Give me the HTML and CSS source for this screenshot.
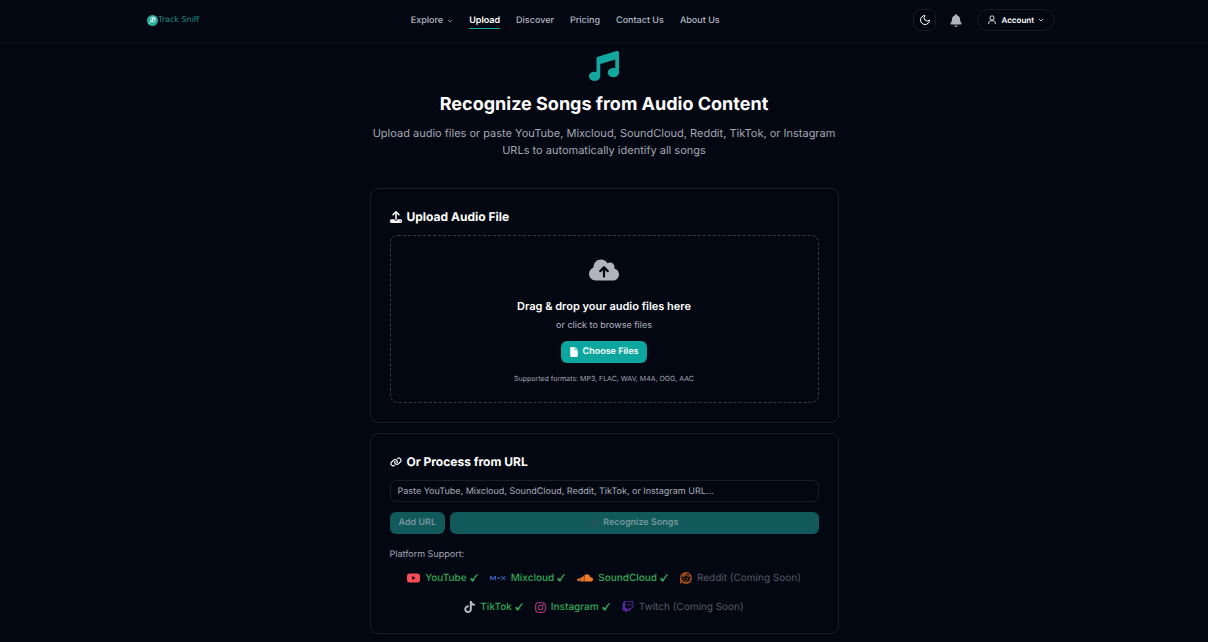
FILE: index.html
```html
<!DOCTYPE html>
<html lang="en">
<head>
<meta charset="utf-8">
<meta name="viewport" content="width=device-width, initial-scale=1">
<title>Track Sniff - Upload</title>
<link rel="stylesheet" href="styles.css">
</head>
<body>
<header class="header">
  <div class="header-inner">
    <a class="logo" href="#">
      <svg class="logo-mark" viewBox="0 0 22 22" aria-hidden="true"><circle cx="11" cy="11" r="11" fill="#27a99c"/><circle cx="12" cy="9" r="5" fill="none" stroke="#d8f5f1" stroke-width="1.600"/><path d="M8 13l-4 4.500M11 11.500V7l3-1v4" fill="none" stroke="#fff" stroke-width="1.800"/><circle cx="10" cy="11.500" r="1.500" fill="#fff"/></svg>
      <span>Track Sniff</span>
    </a>
    <nav class="nav">
      <a href="#">Explore <svg class="chevron" viewBox="0 0 24 24" aria-hidden="true"><path d="m4 8 8 8 8-8"/></svg></a>
      <a class="active" href="#">Upload</a>
      <a href="#">Discover</a>
      <a href="#">Pricing</a>
      <a href="#">Contact Us</a>
      <a href="#">About Us</a>
    </nav>
    <div class="actions">
      <button class="theme" type="button" aria-label="Toggle theme"><svg class="line-icon" viewBox="0 0 24 24"><path d="M12 3a6 6 0 0 0 9 9 9 9 0 1 1-9-9Z"/></svg></button>
      <button class="bell" type="button" aria-label="Notifications"><svg viewBox="0 0 448 512"><path d="M224 0c-17.700 0-32 14.300-32 32V51.200C119 66 64 130.600 64 208v18.800c0 47-17.300 92.400-48.500 127.600l-7.400 8.300c-8.400 9.400-10.400 22.900-5.300 34.400S19.400 416 32 416H416c12.600 0 24-7.400 29.200-18.900s3.100-25-5.300-34.400l-7.400-8.300C401.300 319.200 384 273.900 384 226.800V208c0-77.400-55-142-128-156.800V32c0-17.700-14.300-32-32-32zm45.300 493.300c12-12 18.700-28.300 18.700-45.300H160c0 17 6.700 33.300 18.700 45.300s28.300 18.700 45.300 18.700s33.300-6.700 45.300-18.700z"/></svg></button>
      <button class="account" type="button"><svg class="line-icon user" viewBox="0 0 24 24" aria-hidden="true"><circle cx="12" cy="7" r="5"/><path d="M4 22v-3a5 5 0 0 1 5-5h6a5 5 0 0 1 5 5v3"/></svg>Account<svg class="chevron" viewBox="0 0 24 24" aria-hidden="true"><path d="m4 8 8 8 8-8"/></svg></button>
    </div>
  </div>
</header>

<main class="main">
  <section class="hero">
    <svg class="hero-icon" viewBox="0 0 512 512" aria-hidden="true"><path d="M499.100 6.300c8.100 6 12.900 15.600 12.900 25.700v72V368c0 44.200-43 80-96 80s-96-35.800-96-80s43-80 96-80c11.200 0 22 1.600 32 4.600V147L192 223.800V432c0 44.200-43 80-96 80s-96-35.800-96-80s43-80 96-80c11.200 0 22 1.600 32 4.600V200 128c0-14.100 9.300-26.600 22.800-30.700l320-96c9.700-2.900 20.200-1.100 28.300 5z"/></svg>
    <h1>Recognize Songs from Audio Content</h1>
    <p>Upload audio files or paste YouTube, Mixcloud, SoundCloud, Reddit, TikTok, or Instagram URLs to automatically identify all songs</p>
  </section>

  <section class="card">
    <h2><svg class="upload-icon" viewBox="0 0 512 512" aria-hidden="true"><path d="M288 109.300V352c0 17.700-14.300 32-32 32s-32-14.300-32-32V109.300l-73.400 73.400c-12.500 12.500-32.800 12.500-45.300 0s-12.500-32.800 0-45.300l128-128c12.500-12.500 32.800-12.500 45.300 0l128 128c12.500 12.500 12.500 32.800 0 45.300s-32.800 12.500-45.300 0L288 109.300zM64 352H192c0 35.300 28.700 64 64 64s64-28.700 64-64H448c35.300 0 64 28.700 64 64v32c0 35.300-28.700 64-64 64H64c-35.300 0-64-28.700-64-64V416c0-35.300 28.700-64 64-64zM432 456a24 24 0 1 0 0-48 24 24 0 1 0 0 48z"/></svg>Upload Audio File</h2>
    <div class="dropzone">
      <svg class="cloud" viewBox="0 0 640 512" aria-hidden="true"><path d="M144 480C64.500 480 0 415.500 0 336c0-62.800 40.200-116.200 96.200-135.900c-.1-2.700-.2-5.400-.2-8.100c0-88.400 71.600-160 160-160c59.300 0 111 32.200 138.700 80.200C409.900 102 428.300 96 448 96c53 0 96 43 96 96c0 12.200-2.300 23.800-6.400 34.600C596 238.400 640 290.100 640 352c0 70.700-57.300 128-128 128H144zm79-217c-9.400 9.400-9.400 24.600 0 33.900s24.600 9.400 33.900 0l39-39V392c0 13.300 10.700 24 24 24s24-10.700 24-24V257.900l39 39c9.400 9.400 24.600 9.400 33.900 0s9.400-24.600 0-33.900l-80-80c-9.400-9.400-24.600-9.400-33.900 0l-80 80z"/></svg>
      <h3>Drag &amp; drop your audio files here</h3>
      <p class="browse">or click to browse files</p>
      <button class="btn choose" type="button"><svg viewBox="0 0 384 512" aria-hidden="true"><path d="M0 64C0 28.700 28.700 0 64 0H224V128c0 17.700 14.300 32 32 32H384V448c0 35.300-28.700 64-64 64H64c-35.300 0-64-28.700-64-64V64zm384 64H256V0L384 128z"/></svg>Choose Files</button>
      <p class="formats">Supported formats: MP3, FLAC, WAV, M4A, OGG, AAC</p>
    </div>
  </section>

  <section class="card">
    <h2><svg class="link-icon" viewBox="0 0 640 512" aria-hidden="true"><path d="M579.800 267.700c56.500-56.500 56.500-148 0-204.500c-50-50-128.800-56.500-186.300-15.400l-1.600 1.100c-14.400 10.300-17.700 30.300-7.400 44.600s30.300 17.700 44.600 7.400l1.600-1.100c32.100-22.900 76-19.300 103.800 8.600c31.500 31.500 31.500 82.500 0 114L422.300 334.800c-31.500 31.500-82.500 31.500-114 0c-27.900-27.900-31.500-71.800-8.600-103.800l1.100-1.600c10.300-14.400 6.900-34.400-7.400-44.600s-34.400-6.900-44.600 7.400l-1.100 1.600C206.500 251.200 213 330 263 380c56.500 56.500 148 56.500 204.500 0L579.800 267.700zM60.200 244.300c-56.500 56.500-56.500 148 0 204.500c50 50 128.800 56.500 186.300 15.400l1.600-1.100c14.400-10.300 17.700-30.300 7.400-44.600s-30.300-17.700-44.600-7.400l-1.600 1.100c-32.100 22.900-76 19.300-103.800-8.600C74 372 74 321 105.500 289.500L217.700 177.200c31.500-31.500 82.500-31.500 114 0c27.900 27.900 31.500 71.800 8.600 103.900l-1.100 1.600c-10.300 14.400-6.900 34.400 7.400 44.600s34.400 6.900 44.600-7.400l1.100-1.600C433.500 260.800 427 182 377 132c-56.500-56.500-148-56.500-204.500 0L60.200 244.300z"/></svg>Or Process from URL</h2>
    <form class="url-form">
      <input type="url" aria-label="Audio URL" placeholder="Paste YouTube, Mixcloud, SoundCloud, Reddit, TikTok, or Instagram URL...">
      <div class="buttons">
        <button class="btn" type="button" disabled>Add URL</button>
        <button class="btn recognize" type="button" disabled><svg viewBox="0 0 16 16" aria-hidden="true"><path d="M6 12V3l8-1v9" fill="none" stroke="currentColor" stroke-width="2"/><circle cx="4" cy="12" r="2.500"/><circle cx="12" cy="11" r="2.500"/></svg>Recognize Songs</button>
      </div>
    </form>
    <p class="support-label">Platform Support:</p>
    <ul class="platforms">
      <li><svg class="youtube" viewBox="15 64 546 384" aria-hidden="true"><path d="M549.655 124.083c-6.281-23.650-24.787-42.276-48.284-48.597C458.781 64 288 64 288 64S117.220 64 74.629 75.486c-23.497 6.322-42.003 24.947-48.284 48.597-11.412 42.867-11.412 132.305-11.412 132.305s0 89.438 11.412 132.305c6.281 23.650 24.787 41.500 48.284 47.821C117.220 448 288 448 288 448s170.780 0 213.371-11.486c23.497-6.321 42.003-24.171 48.284-47.821 11.412-42.867 11.412-132.305 11.412-132.305s0-89.438-11.412-132.305zm-317.510 213.508V175.185l142.739 81.205-142.739 81.201z"/></svg>YouTube <svg class="check" viewBox="0 0 16 16" role="img" aria-label="supported"><path d="M0 9.500l4-2 2 3Q9 4 14 0l2 1Q10 8 7 15H4z"/></svg></li>
      <li><svg class="mixcloud" viewBox="0 0 32 12" aria-hidden="true"><path d="M1.500 10.500V2L6 9l4.500-7v8.500M14 6.200h7M23 2l8 8.500M31 2l-8 8.500"/></svg>Mixcloud <svg class="check" viewBox="0 0 16 16" role="img" aria-label="supported"><path d="M0 9.500l4-2 2 3Q9 4 14 0l2 1Q10 8 7 15H4z"/></svg></li>
      <li><svg class="soundcloud" viewBox="0 0 32 15" aria-hidden="true"><path d="M1 9.500v3M3.500 8.500v5M6 7.500V14M8.500 6.500v8M11 5v9.500M13.500 3v11.500" fill="none" stroke="currentColor" stroke-width="2.200"/><path d="M15 1.500C20-1.500 26 1 26.500 6.500 29 5.500 32 7.500 32 10.500S30 14.500 28 14.500H15z"/></svg>SoundCloud <svg class="check" viewBox="0 0 16 16" role="img" aria-label="supported"><path d="M0 9.500l4-2 2 3Q9 4 14 0l2 1Q10 8 7 15H4z"/></svg></li>
      <li class="soon"><svg class="reddit" viewBox="0 0 24 24" aria-hidden="true"><path d="M12 0a12 12 0 1 1-8.500 20.500L1 23.500c-.6.500-1 .3-1-.5V12A12 12 0 0 1 12 0z"/><g class="cutout"><ellipse cx="12" cy="14" rx="7.500" ry="5.500"/><circle cx="4.700" cy="10.800" r="2"/><circle cx="19.300" cy="10.800" r="2"/><circle cx="16.500" cy="5" r="1.700"/><path d="M12 9l1-5 3.500 1" fill="none" stroke="#030712" stroke-width="1.200"/></g><circle cx="9" cy="13" r="1.700"/><circle cx="15" cy="13" r="1.700"/><path d="M9 16.500q3 2.500 6 0" fill="none" stroke="currentColor" stroke-width="1.500"/></svg>Reddit (Coming Soon)</li>
      <li><svg class="tiktok" viewBox="0 0 448 512" aria-hidden="true"><path d="M448 209.900a210.100 210.100 0 0 1-122.800-39.300V349.400A162.600 162.600 0 1 1 185 188.300V278.200a74.600 74.600 0 1 0 52.200 71.200V0h88a121.200 121.200 0 0 0 1.900 22.200 122.200 122.200 0 0 0 53.900 80.200A121.400 121.400 0 0 0 448 122.400z"/></svg>TikTok <svg class="check" viewBox="0 0 16 16" role="img" aria-label="supported"><path d="M0 9.500l4-2 2 3Q9 4 14 0l2 1Q10 8 7 15H4z"/></svg></li>
      <li><svg class="instagram" viewBox="0 0 24 24" aria-hidden="true"><rect x="1.500" y="1.500" width="21" height="21" rx="5.500"/><circle cx="12" cy="12" r="5"/><circle class="dot" cx="18" cy="6" r="1.500"/></svg>Instagram <svg class="check" viewBox="0 0 16 16" role="img" aria-label="supported"><path d="M0 9.500l4-2 2 3Q9 4 14 0l2 1Q10 8 7 15H4z"/></svg></li>
      <li class="soon"><svg class="twitch" viewBox="0 0 512 512" aria-hidden="true"><path d="M391.170 103.470H352.540v109.700h38.630ZM285 103H246.370V212.750H285ZM120.830 0 24.310 91.420V420.580H140.140V512l96.530-91.420h77.250L487.690 256V0ZM449.070 237.750l-77.220 73.120H294.610l-67.600 64v-64H140.140V36.580H449.070Z"/></svg>Twitch (Coming Soon)</li>
    </ul>
  </section>
</main>
</body>
</html>
```

FILE: styles.css
```css
* { box-sizing: border-box; }

body {
  margin: 0;
  background: #030712;
  color: #fff;
  font-family: Inter, "Liberation Sans", sans-serif;
  font-size: 9px;
  line-height: 14px;
  text-rendering: geometricPrecision;
}

h1, h2, h3, p, ul { margin: 0; padding: 0; }
a { color: inherit; text-decoration: none; }
button, input { font: inherit; color: inherit; text-rendering: inherit; }
svg { display: block; flex: none; fill: currentColor; }

.header { border-bottom: 1px solid #0e121d; }

.header-inner {
  display: flex;
  align-items: center;
  justify-content: space-between;
  max-width: 914px;
  height: 42px;
  margin: 0 auto;
  padding: 0 6px 2px 0;
}

.logo {
  display: flex;
  align-items: center;
  width: 70px;
  color: #218c87;
  font-family: "DejaVu Sans", sans-serif;
  font-size: 8px;
  white-space: nowrap;
}

.logo-mark { width: 11px; height: 11px; }

.nav {
  display: flex;
  gap: 16px;
  color: #b4b8c2;
  font-weight: 500;
}

.nav a {
  display: flex;
  align-items: center;
  gap: 4px;
  padding-top: 3px;
  border-bottom: 1px solid transparent;
}

.nav .active {
  border-bottom-color: #12a8a0;
  color: #fff;
  font-weight: 600;
}

.chevron {
  width: 6px;
  height: 6px;
  fill: none;
  stroke: currentColor;
  stroke-width: 3;
}

.line-icon {
  width: 12px;
  height: 12px;
  fill: none;
  stroke: currentColor;
  stroke-width: 2;
}

.actions { display: flex; align-items: center; }
.actions button { background: none; cursor: pointer; }

.actions .theme {
  display: grid;
  place-items: center;
  width: 23px;
  height: 22px;
  padding: 0;
  border: 1px solid #171b26;
  border-radius: 7px;
}

.bell {
  margin: 0 15px 0 14px;
  padding: 0;
  border: 0;
  color: #b1b4bf;
}

.bell svg { width: 12px; height: 13px; }

.account {
  display: flex;
  align-items: center;
  gap: 4px;
  height: 22px;
  padding: 0 10px 0 9px;
  border: 1px solid #171b26;
  border-radius: 11px;
  font-size: 8px;
  font-weight: 600;
}

.user { width: 10px; height: 10px; }

.main {
  display: flex;
  flex-direction: column;
  gap: 10px;
  max-width: 469px;
  margin: 0 auto;
  padding: 8px 0;
}

.hero {
  padding-bottom: 19px;
  text-align: center;
}

.hero-icon {
  width: 30px;
  height: 30px;
  margin: 0 auto 11px;
  color: #12a8a0;
}

.hero h1 {
  margin-bottom: 8px;
  font-size: 18px;
  font-weight: 700;
  line-height: 25px;
}

.hero p {
  color: #a4a8b3;
  font-size: 11px;
  line-height: 17px;
}

.card {
  padding: 19px;
  border: 1px solid #191d28;
  border-radius: 8px;
}

.card h2 {
  display: flex;
  align-items: center;
  gap: 5px;
  margin-bottom: 10px;
  font-size: 12px;
  font-weight: 700;
  line-height: 17px;
}

.upload-icon { width: 12px; height: 12px; }
.link-icon { width: 12px; height: 10px; }

.dropzone {
  display: flex;
  flex-direction: column;
  align-items: center;
  padding: 22px 20px 16px;
  border: 1px dashed #363a45;
  border-radius: 8px;
}

.cloud { width: 30px; height: 24px; color: #b1b4bf; }

.dropzone h3 {
  margin: 16px 0 4px;
  font-size: 11px;
  font-weight: 600;
  line-height: 17px;
}

.browse { margin-bottom: 8px; color: #b4b8c2; }

.btn {
  display: flex;
  align-items: center;
  justify-content: center;
  gap: 5px;
  height: 22px;
  padding: 0 9px;
  border: 0;
  border-radius: 6px;
  background: #0da69f;
  font-weight: 600;
}

.choose svg { width: 8px; height: 10px; }

.formats {
  margin-top: 9px;
  color: #a4a8b3;
  font-size: 7px;
}

.btn:disabled {
  background: #11595b;
  color: #78969d;
}

.url-form {
  display: flex;
  flex-direction: column;
  gap: 10px;
}

.url-form input {
  width: 100%;
  height: 22px;
  padding: 0 7px;
  border: 1px solid #191d28;
  border-radius: 6px;
  background: transparent;
}

.url-form input::placeholder { color: #a9adb7; opacity: 1; }

.buttons { display: flex; gap: 5px; }
.recognize { flex: 1; }
.recognize svg { width: 8px; height: 8px; color: #344d59; }

.support-label { margin: 14px 0 9px; color: #a4a8b3; }

.platforms {
  display: flex;
  flex-wrap: wrap;
  justify-content: center;
  gap: 15px 12px;
  font-size: 10px;
  list-style: none;
}

.platforms li {
  display: flex;
  align-items: center;
  gap: 5px;
  color: #31a858;
  font-weight: 500;
}

.platforms .soon { color: #555a66; font-weight: 400; }
.check { width: 8px; height: 8px; margin-left: -2px; }

.youtube { width: 13px; height: 10px; color: #fb4d55; }
.mixcloud { width: 16px; height: 6px; fill: none; stroke: #3975d8; stroke-width: 2; }
.soundcloud { width: 16px; height: 8px; color: #ef7b2b; }
.reddit { width: 12px; height: 12px; color: #9a471d; }
.cutout { fill: #030712; }
.tiktok { width: 11px; height: 12px; color: #b4b8c2; }
.instagram { width: 11px; height: 11px; fill: none; stroke: #d9459b; stroke-width: 2; }
.instagram .dot { fill: #d9459b; stroke: none; }
.twitch { width: 12px; height: 12px; color: #58299d; }
```
